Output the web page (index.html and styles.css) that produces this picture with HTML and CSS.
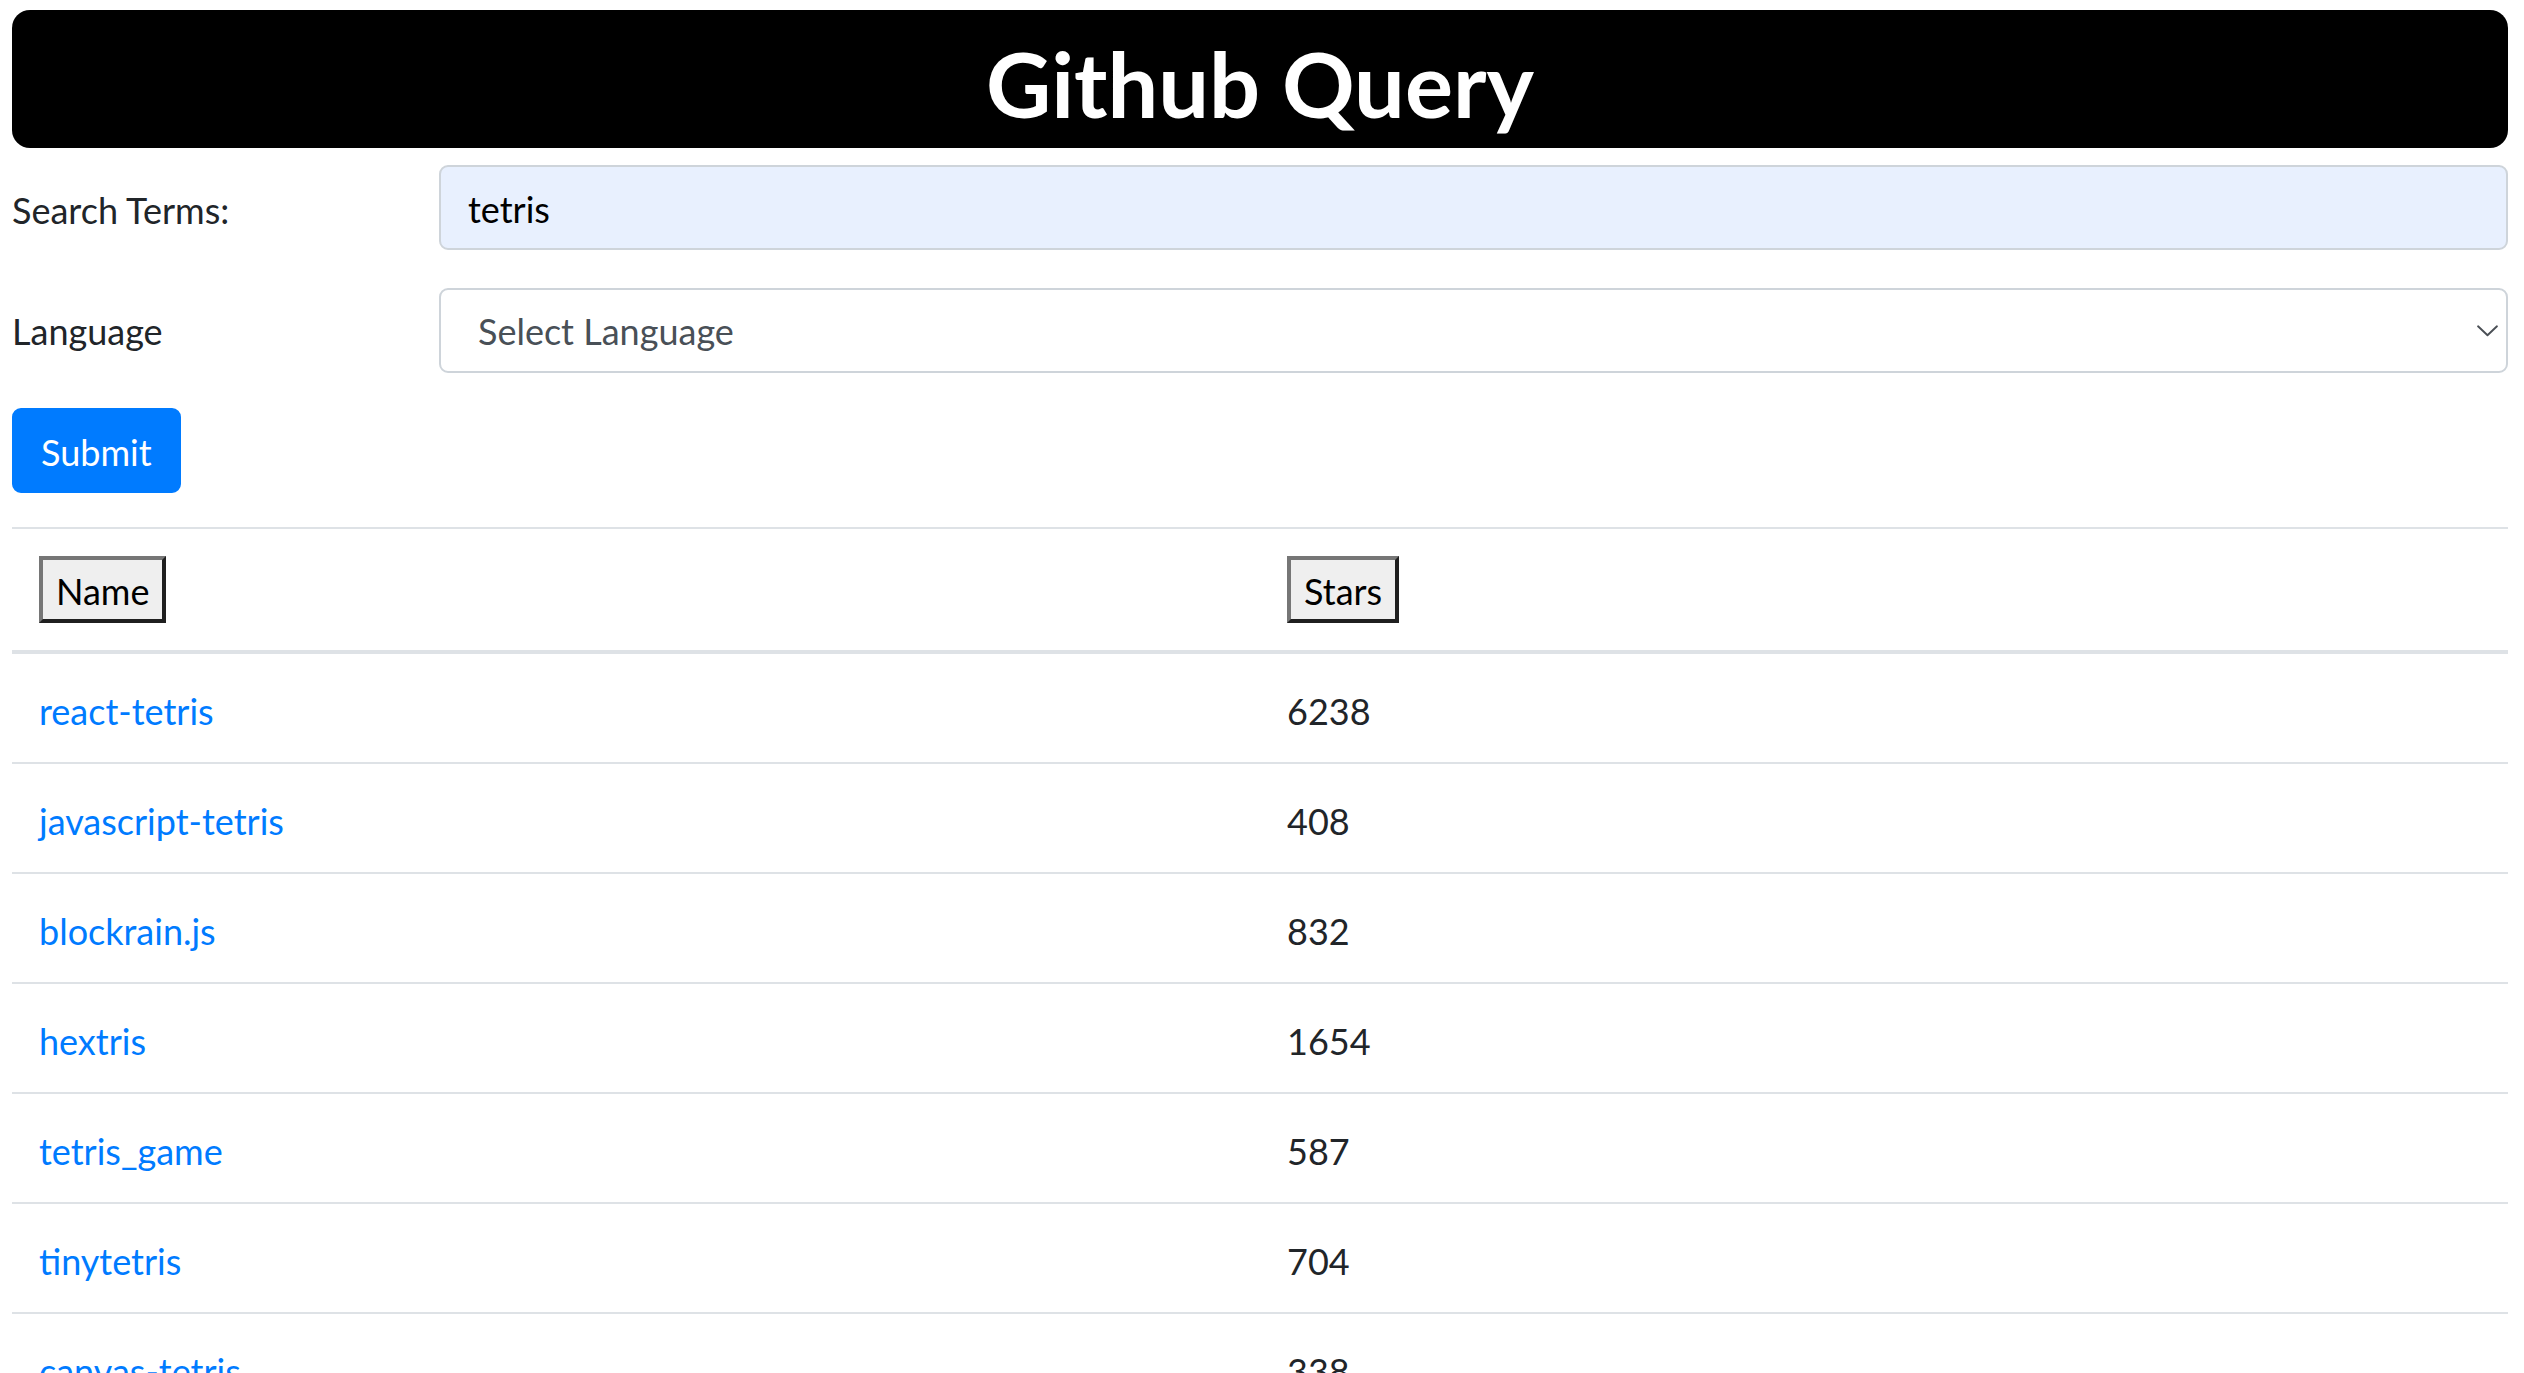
FILE: index.html
```html
<!DOCTYPE html>
<html lang="en">
<head>
<meta charset="utf-8">
<title>Github Query</title>
<link rel="stylesheet" href="styles.css">
</head>
<body>
<div class="page">
  <header class="banner"><h1 class="title">Github Query</h1></header>
  <form class="query">
    <div class="field field-terms">
      <label class="field-label" for="terms">Search Terms:</label>
      <input class="field-control text-input" id="terms" type="text" value="tetris">
    </div>
    <div class="field field-lang">
      <label class="field-label" for="lang">Language</label>
      <div class="field-control select-wrap">
        <select id="lang" class="select"><option>Select Language</option></select>
        <svg class="chevron" viewBox="0 0 20 11" aria-hidden="true"><path d="M1 1 L10 9.5 L19 1" fill="none" stroke="#4a4f55" stroke-width="1.8" stroke-linecap="round" stroke-linejoin="round"/></svg>
      </div>
    </div>
    <button class="submit" type="button">Submit</button>
  </form>
  <table class="results">
    <thead>
      <tr><th class="col"><button class="sort" type="button">Name</button></th><th class="col"><button class="sort" type="button">Stars</button></th></tr>
    </thead>
    <tbody>
      <tr><td><a href="#">react-tetris</a></td><td>6238</td></tr>
      <tr><td><a href="#">javascript-tetris</a></td><td>408</td></tr>
      <tr><td><a href="#">blockrain.js</a></td><td>832</td></tr>
      <tr><td><a href="#">hextris</a></td><td>1654</td></tr>
      <tr><td><a href="#">tetris_game</a></td><td>587</td></tr>
      <tr><td><a href="#">tinytetris</a></td><td>704</td></tr>
      <tr><td><a href="#">canvas-tetris</a></td><td>338</td></tr>
    </tbody>
  </table>
</div>
</body>
</html>
```
FILE: styles.css
```css
* { box-sizing: border-box; }
html, body { margin: 0; padding: 0; background: #fff; }
body {
  font-family: Lato, "Open Sans", sans-serif;
  font-size: 36px;
  line-height: 54px;
  color: #212529;
}
.page { width: 2496px; margin: 0 0 0 12px; padding-top: 10px; }
.banner {
  height: 138px;
  background: #000;
  border-radius: 18px;
  display: flex;
  align-items: center;
  justify-content: center;
}
.title {
  margin: 0;
  padding-top: 7px;
  font-size: 90px;
  line-height: 108px;
  font-weight: 700;
  color: #fff;
}
.query { margin: 17px 0 0; }
.field { display: flex; align-items: center; }
.field-terms { margin-bottom: 38px; }
.field-lang { margin-bottom: 35px; }
.field-label { width: 427px; flex: none; padding-top: 4px; }
.field-lang .field-label { padding-top: 0; }
.field-control {
  flex: 1;
  height: 85px;
  border: 2px solid #ced4da;
  border-radius: 9px;
  margin: 0;
}
.text-input {
  padding: 3px 27px 0;
  font: inherit;
  color: #000;
  background: #e8f0fe;
  outline: none;
}
.select-wrap { position: relative; background: #fff; }
.select {
  -webkit-appearance: none;
  appearance: none;
  display: block;
  width: 100%;
  height: 100%;
  border: 0;
  background: transparent;
  font: inherit;
  color: #495057;
  padding: 0 60px 0 37px;
  outline: none;
}
.chevron {
  position: absolute;
  right: 8px;
  top: 50%;
  width: 21px;
  height: 12px;
  margin-top: -6px;
  pointer-events: none;
}
.submit {
  display: block;
  height: 85px;
  margin: 0;
  padding: 3px 27px 0;
  border: 2px solid #007bff;
  border-radius: 9px;
  background: #007bff;
  color: #fff;
  font: inherit;
}
.results {
  margin-top: 34px;
  width: 100%;
  table-layout: fixed;
  border-collapse: collapse;
}
.results .col { width: 50%; }
.results th, .results td {
  padding: 30px 27px 24px;
  text-align: left;
  vertical-align: top;
  font-weight: 400;
  border-top: 2px solid #dee2e6;
}
.results thead th { padding: 27px; border-bottom: 4px solid #dee2e6; }
.sort {
  display: block;
  height: 67px;
  margin: 0;
  padding: 3px 13px 0;
  font: inherit;
  color: #000;
  background: #efefef;
  border: 4px solid;
  border-color: #767676 #1f1f1f #1f1f1f #767676;
}
.results a { color: #007bff; text-decoration: none; }
```
